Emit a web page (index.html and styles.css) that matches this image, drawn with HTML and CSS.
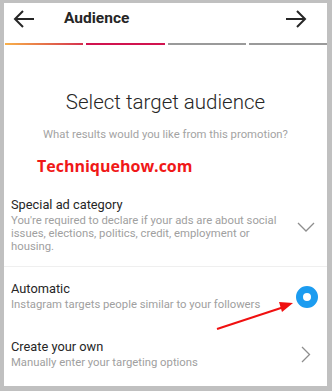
FILE: index.html
```html
<!DOCTYPE html>
<html>
<head>
<meta charset="utf-8">
<link rel="stylesheet" href="styles.css">
</head>
<body>
<div class="screen">
  <div class="header">
    <svg class="nav-icon" width="22" height="18" viewBox="0 0 22 18"><path d="M21 9H2M10 1L2 9l8 8" fill="none" stroke="#262626" stroke-width="2"/></svg>
    <div class="title">Audience</div>
    <div class="spacer"></div>
    <svg class="nav-icon fwd" width="22" height="18" viewBox="0 0 22 18"><path d="M1 9h19M12 1l8 8-8 8" fill="none" stroke="#262626" stroke-width="2"/></svg>
  </div>
  <div class="progress">
    <div class="seg seg1"></div>
    <div class="seg seg2"></div>
    <div class="seg"></div>
    <div class="seg"></div>
  </div>
  <h1 class="heading">Select target audience</h1>
  <p class="sub">What results would you like from this promotion?</p>
  <div class="watermark">Techniquehow.com</div>
  <div class="row row-special">
    <div class="row-text">
      <div class="row-title">Special ad category</div>
      <div class="row-desc">You're required to declare if your ads are about social issues, elections, politics, credit, employment or housing.</div>
    </div>
    <svg class="chev-down" width="18" height="10" viewBox="0 0 18 10"><path d="M1 1l8 8 8-8" fill="none" stroke="#8e8e8e" stroke-width="1.3"/></svg>
  </div>
  <div class="divider"></div>
  <div class="row row-auto">
    <div class="row-text">
      <div class="row-title">Automatic</div>
      <div class="row-desc">Instagram targets people similar to your followers</div>
    </div>
    <div class="radio"></div>
  </div>
  <div class="row row-own">
    <div class="row-text">
      <div class="row-title">Create your own</div>
      <div class="row-desc">Manually enter your targeting options</div>
    </div>
    <svg class="chev-right" width="10" height="17" viewBox="0 0 10 17"><path d="M1 1l7.5 7.5L1 16" fill="none" stroke="#8e8e8e" stroke-width="1.3"/></svg>
  </div>
  <svg class="annot" width="90" height="40" viewBox="0 0 90 40"><path d="M3 34L70 12" stroke="#f01010" stroke-width="2"/><path d="M79 8L65 7l3 10z" fill="#f01010"/></svg>
</div>
</body>
</html>
```
FILE: styles.css
```css
html, body {
  margin: 0;
  padding: 0;
}
body {
  background: #c0c0c0;
  width: 332px;
  height: 391px;
  overflow: hidden;
  font-family: Roboto, "Liberation Sans", sans-serif;
  color: #262626;
}
.screen {
  position: relative;
  margin: 3px 5px 0 4px;
  height: 383px;
  background: #fff;
  display: flex;
  flex-direction: column;
}
.header {
  height: 40px;
  display: flex;
  align-items: center;
  padding: 0 20px 0 9px;
  box-sizing: border-box;
}
.nav-icon {
  display: block;
  margin-top: -9px;
}
.title {
  margin-left: 29px;
  margin-top: -11px;
  font-size: 15.5px;
  font-weight: 700;
}
.spacer {
  flex: 1;
}
.progress {
  display: flex;
  gap: 3px;
  padding-left: 1px;
  height: 2px;
}
.seg {
  flex: 1;
  background: #9a9a9a;
}
.seg1 {
  background: linear-gradient(90deg, #f9b14a, #e2674a 60%, #d6304f);
}
.seg2 {
  background: #d1134f;
}
.heading {
  margin: 45px 0 0;
  font-size: 20.5px;
  font-weight: 300;
  text-align: center;
  line-height: 24px;
}
.sub {
  margin: 14px 0 0;
  font-size: 11.3px;
  color: #a3a3a3;
  text-align: center;
  line-height: 14px;
}
.watermark {
  margin: 14px 0 0 33px;
  font-family: "Open Sans", sans-serif;
  font-weight: 700;
  font-size: 16px;
  line-height: 20px;
  color: #f01818;
}
.row {
  display: flex;
  align-items: center;
  padding: 0 11px 0 7px;
}
.row-text {
  flex: 1;
}
.row-title {
  font-size: 12.8px;
  line-height: 16px;
  margin-bottom: 2px;
}
.row-desc {
  font-size: 11.3px;
  line-height: 12.8px;
  color: #a0a0a0;
}
.row-special {
  margin-top: 21px;
  padding-bottom: 13px;
}
.chev-down {
  margin-right: 1px;
  margin-left: 6px;
  margin-top: 4px;
}
.divider {
  height: 1px;
  background: #efefef;
}
.row-auto {
  margin-top: 14px;
  padding-right: 9px;
}
.radio {
  width: 22px;
  height: 22px;
  border-radius: 50%;
  box-sizing: border-box;
  border: 7px solid #1c9cf0;
  background: #fff;
}
.row-own {
  margin-top: 27px;
  padding-right: 16px;
}
.annot {
  position: absolute;
  left: 210px;
  top: 292px;
}
```
